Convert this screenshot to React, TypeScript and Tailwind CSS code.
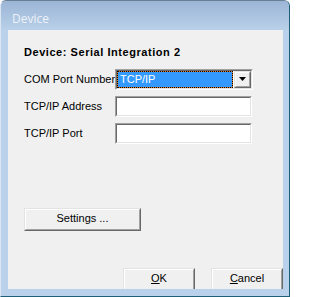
import React from 'react';

const font = { fontFamily: '"Liberation Sans", Arial, sans-serif' };

function Sunken({ className, children }: { className?: string; children?: React.ReactNode }) {
    return (
        <div className={`border border-t-[#a0a0a0] border-l-[#a0a0a0] border-b-white border-r-white ${className ?? ''}`}>
            <div className="w-full h-full border border-t-[#696969] border-l-[#696969] border-b-[#e3e3e3] border-r-[#e3e3e3] bg-white">
                {children}
            </div>
        </div>
    );
}

function Raised({ className, children }: { className?: string; children?: React.ReactNode }) {
    return (
        <div className={`border border-t-[#e3e3e3] border-l-[#e3e3e3] border-b-[#696969] border-r-[#696969] ${className ?? ''}`}>
            <div className="w-full h-full flex items-center justify-center border border-t-white border-l-white border-b-[#a0a0a0] border-r-[#a0a0a0] bg-[#f0f0f0] text-[11px] text-black pb-[1px]">
                {children}
            </div>
        </div>
    );
}

export default function App() {
    return (
        <div className="w-[290px] h-[297px] flex flex-col rounded-t-[6px] border border-t-[#6a7f96] border-l-[#dbe6f2] border-r-[#1f5f78] border-b-[#1f5f78] bg-[#b9d1ea] overflow-hidden" style={font}>
            {/* title bar */}
            <div className="h-[29px] shrink-0 pl-[11px] pt-[10px] bg-gradient-to-b from-[#9bb5d5] to-[#b9d0e9]">
                <span className="block text-[12px] leading-[16px] text-[#edf2f8]" style={{ fontFamily: '"Open Sans", "Noto Sans", sans-serif' }}>Device</span>
            </div>

            <div className="flex-1 flex pl-[7px] pr-[6px] pb-[7px] min-h-0">
                <div className="flex-1 bg-[#f0f0f0] overflow-hidden pl-[16px] pt-[14px] flex flex-col">
                    <div className="h-[17px] flex items-center text-[11px] font-bold tracking-[0.55px] text-black whitespace-nowrap">Device: Serial Integration 2</div>

                    <div className="mt-[8px] h-[21px] flex items-center">
                        <span className="w-[91px] shrink-0 whitespace-nowrap text-[11px] text-black">COM Port Number</span>
                        <Sunken className="w-[138px] h-[21px] shrink-0">
                            <div className="flex h-full">
                                <div className="flex-1 h-full bg-[#e07b1c]">
                                    <div className="h-full border border-dotted border-black bg-[#3399ff] bg-clip-padding pl-[2px] flex items-center text-[11px] text-white">TCP/IP</div>
                                </div>
                                <Raised className="w-[17px] h-full ml-[1px]">
                                    <svg width="7" height="4" viewBox="0 0 7 4"><polygon points="0,0 7,0 3.5,4" fill="black" /></svg>
                                </Raised>
                            </div>
                        </Sunken>
                    </div>

                    <div className="mt-[6px] h-[21px] flex items-center">
                        <span className="w-[91px] shrink-0 whitespace-nowrap text-[11px] text-black">TCP/IP Address</span>
                        <Sunken className="w-[137px] h-[21px] shrink-0" />
                    </div>

                    <div className="mt-[6px] h-[21px] flex items-center">
                        <span className="w-[91px] shrink-0 whitespace-nowrap text-[11px] text-black">TCP/IP Port</span>
                        <Sunken className="w-[137px] h-[21px] shrink-0" />
                    </div>

                    <Raised className="mt-[64px] w-[117px] h-[23px] shrink-0">Settings ...</Raised>

                    <div className="mt-[37px] flex justify-end gap-[16px] shrink-0">
                        <Raised className="w-[72px] h-[23px]"><span><u>O</u>K</span></Raised>
                        <Raised className="w-[72px] h-[23px]"><span><u>C</u>ancel</span></Raised>
                    </div>
                </div>
            </div>
        </div>
    );
}
